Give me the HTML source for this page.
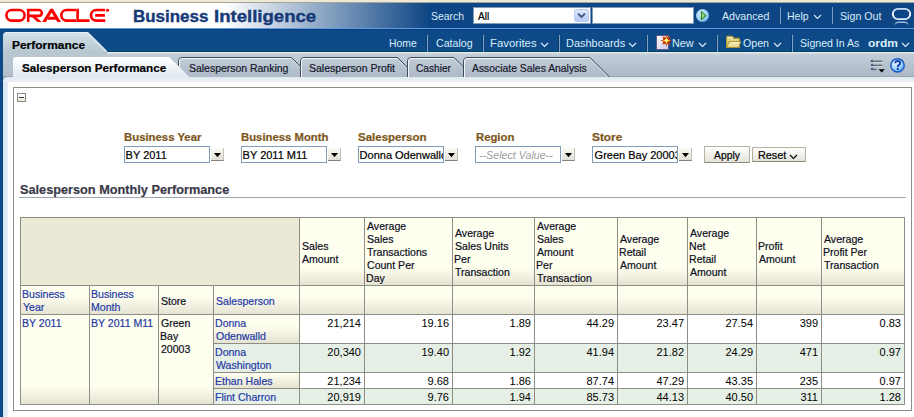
<!DOCTYPE html>
<html><head><meta charset="utf-8"><style>
html,body{margin:0;padding:0;}
body{width:914px;height:417px;overflow:hidden;position:relative;background:#fff;font-family:"Liberation Sans", sans-serif;}
body>div,body>svg,body>span{position:absolute;}
.t{white-space:nowrap;display:block;}
svg text{font-family:"Liberation Sans", sans-serif;}
</style></head><body>
<div style="left:0px;top:0px;width:914px;height:2px;background:#ECE9D8;"></div>
<div style="left:0px;top:2px;width:914px;height:1px;background:#A8A494;"></div>
<div style="left:0px;top:3px;width:914px;height:25px;background:linear-gradient(90deg,#FFFFFF 0px,#FFFFFF 225px,#0E4584 430px,#0E4584 914px);"></div>
<div style="left:0px;top:28px;width:914px;height:1px;background:#5C9BE6;"></div>
<div style="left:0px;top:29px;width:914px;height:1px;background:#0A3D79;"></div>
<div style="left:0px;top:30px;width:914px;height:19px;background:#0F4A88;"></div>
<div style="left:0px;top:49px;width:914px;height:2px;background:#0A5082;"></div>
<div style="left:0px;top:51px;width:914px;height:1px;background:#063E6E;"></div>
<svg style="left:0;top:0" width="120" height="28" viewBox="0 0 120 28">
<g fill="none" stroke="#FF0000" stroke-width="2.6">
<rect x="6.4" y="10" width="18.2" height="10.6" rx="5.3" ry="5.3"/>
<path d="M28.2 21.9V10H38.9a2.95 2.95 0 0 1 0 5.9H29.5"/>
<path d="M76 10H66.6a5.3 5.3 0 0 0 0 10.6H76" />
<path d="M77.6 8.7V20.6H89.6" />
<path d="M105.2 10H96.3a5.3 5.3 0 0 0 0 10.6H105.2M95.2 15.35H105" />
</g>
<g fill="#FF0000">
<path d="M30.2 15.2H34.2L41.6 21.9H37.4Z"/>
<path d="M42.2 21.9L50.3 8.7H52.9L61.0 21.9H57.3L51.6 12.4L45.9 21.9Z"/>
<path d="M49.0 16.7H55.0L56.9 19.7H47.9Q47.4 18.2 49.0 16.7Z"/>
<circle cx="107.6" cy="10.3" r="1.55"/>
</g>
</svg>
<span class="t" style="position:absolute;left:133.44px;top:8px;font-size:16px;line-height:17px;font-weight:bold;color:#173A78;transform:scaleX(1.0600);transform-origin:0 0;-webkit-text-stroke:0.4px #173A78;">Business</span>
<span class="t" style="position:absolute;left:213.54px;top:8px;font-size:16px;line-height:17px;font-weight:bold;color:#173A78;transform:scaleX(1.1609);transform-origin:0 0;-webkit-text-stroke:0.4px #173A78;">Intelligence</span>
<span class="t" style="position:absolute;left:431.20px;top:10px;font-size:11px;line-height:12px;font-weight:normal;color:#D8EEF8;transform:scaleX(0.9486);transform-origin:0 0;">Search</span>
<div style="left:473px;top:7px;width:118px;height:17px;background:#FFFFFF;box-sizing:border-box;border:1px solid #7F9DB9;"></div>
<span class="t" style="position:absolute;left:478.00px;top:10px;font-size:11px;line-height:12px;font-weight:normal;color:#000000;transform:scaleX(0.9167);transform-origin:0 0;-webkit-text-stroke:0.2px #000000;">All</span>
<div style="left:574px;top:9px;width:15px;height:13px;background:linear-gradient(#DDE8FD,#B4CBF6);box-sizing:border-box;border:1px solid #B8CCF0;border-radius:2px;"></div>
<svg style="left:577px;top:12px" width="9" height="7" viewBox="0 0 9 7"><path d="M1 1.5L4.5 5L8 1.5" fill="none" stroke="#4D6185" stroke-width="2"/></svg>
<div style="left:592px;top:7px;width:102px;height:17px;background:#FFFFFF;box-sizing:border-box;border:1px solid #7F9DB9;"></div>
<svg style="left:694px;top:7px" width="18" height="18" viewBox="0 0 18 18"><defs><radialGradient id="gg" cx="0.42" cy="0.4" r="0.62"><stop offset="0" stop-color="#DDF2FF"/><stop offset="0.7" stop-color="#9CD0F6"/><stop offset="1" stop-color="#4A94DC"/></radialGradient></defs><circle cx="8.6" cy="8.6" r="7.3" fill="#0A3468" opacity="0.6"/><circle cx="8.6" cy="8.6" r="6.6" fill="url(#gg)"/><path d="M7.4 4.6L11.9 8.6L7.4 12.6Z" fill="#9EDA8E" stroke="#2C8A1E" stroke-width="1.1" stroke-linejoin="round"/></svg>
<span class="t" style="position:absolute;left:721.50px;top:10px;font-size:11px;line-height:12px;font-weight:normal;color:#D8EEF8;transform:scaleX(0.9694);transform-origin:0 0;">Advanced</span>
<div style="left:780px;top:7px;width:1px;height:17px;background:#7A9CC0;"></div>
<span class="t" style="position:absolute;left:787.05px;top:10px;font-size:11px;line-height:12px;font-weight:normal;color:#D8EEF8;transform:scaleX(0.9545);transform-origin:0 0;">Help</span>
<svg style="left:813px;top:14px" width="9" height="6" viewBox="0 0 9 6"><path d="M1 1L4.5 4.5L8 1" fill="none" stroke="#D8EEF8" stroke-width="1.1"/></svg>
<div style="left:832px;top:7px;width:1px;height:17px;background:#7A9CC0;"></div>
<span class="t" style="position:absolute;left:840.00px;top:10px;font-size:11px;line-height:12px;font-weight:normal;color:#D8EEF8;transform:scaleX(0.9674);transform-origin:0 0;">Sign Out</span>
<svg style="left:890px;top:6px" width="24" height="22" viewBox="0 0 24 22"><defs><linearGradient id="rg" x1="0" y1="0" x2="0" y2="1"><stop offset="0" stop-color="#C8DDF4"/><stop offset="0.5" stop-color="#FFFFFF"/><stop offset="1" stop-color="#DDEBFA"/></linearGradient><linearGradient id="rf" x1="0" y1="0" x2="0" y2="1"><stop offset="0" stop-color="#A8C4E6"/><stop offset="1" stop-color="#0F4A88"/></linearGradient></defs><rect x="2.8" y="2.9" width="17.4" height="10.2" rx="5.1" fill="none" stroke="url(#rg)" stroke-width="1.8"/><path d="M4.5 19Q6 16.2 9 16.2H14Q17 16.2 18.5 19" fill="none" stroke="url(#rf)" stroke-width="1.6"/></svg>
<svg style="left:0;top:29px" width="120" height="23" viewBox="0 0 120 23"><defs><linearGradient id="pt" x1="0" y1="0" x2="0" y2="1"><stop offset="0" stop-color="#D4E3E9"/><stop offset="1" stop-color="#B6C7D1"/></linearGradient></defs><path d="M3 23V6.5Q3 3 6.5 3H87.5L107.5 23Z" fill="url(#pt)"/><path d="M6 3.5H87" stroke="#EAF1F4" stroke-width="1"/><path d="M87.5 3.5L106.5 22.5" stroke="#E2ECF0" stroke-width="1.6"/></svg>
<span class="t" style="position:absolute;left:12.00px;top:39px;font-size:11px;line-height:12px;font-weight:bold;color:#000000;transform:scaleX(1.0866);transform-origin:0 0;-webkit-text-stroke:0.2px #000000;">Performance</span>
<div style="left:426px;top:35px;width:1px;height:17px;background:#0A3A72;"></div>
<div style="left:427px;top:35px;width:1px;height:17px;background:#7FA3C0;"></div>
<div style="left:482px;top:35px;width:1px;height:17px;background:#0A3A72;"></div>
<div style="left:483px;top:35px;width:1px;height:17px;background:#7FA3C0;"></div>
<div style="left:558px;top:35px;width:1px;height:17px;background:#0A3A72;"></div>
<div style="left:559px;top:35px;width:1px;height:17px;background:#7FA3C0;"></div>
<div style="left:646px;top:35px;width:1px;height:17px;background:#0A3A72;"></div>
<div style="left:647px;top:35px;width:1px;height:17px;background:#7FA3C0;"></div>
<div style="left:716px;top:35px;width:1px;height:17px;background:#0A3A72;"></div>
<div style="left:717px;top:35px;width:1px;height:17px;background:#7FA3C0;"></div>
<div style="left:791px;top:35px;width:1px;height:17px;background:#0A3A72;"></div>
<div style="left:792px;top:35px;width:1px;height:17px;background:#7FA3C0;"></div>
<span class="t" style="position:absolute;left:388.55px;top:37px;font-size:11px;line-height:12px;font-weight:normal;color:#D8EEF8;transform:scaleX(0.9464);transform-origin:0 0;">Home</span>
<span class="t" style="position:absolute;left:435.50px;top:37px;font-size:11px;line-height:12px;font-weight:normal;color:#D8EEF8;transform:scaleX(0.9658);transform-origin:0 0;">Catalog</span>
<span class="t" style="position:absolute;left:490.27px;top:37px;font-size:11px;line-height:12px;font-weight:normal;color:#D8EEF8;transform:scaleX(1.0295);transform-origin:0 0;">Favorites</span>
<svg style="left:540px;top:42px" width="9" height="6" viewBox="0 0 9 6"><path d="M1 1L4.5 4.5L8 1" fill="none" stroke="#D8EEF8" stroke-width="1.1"/></svg>
<span class="t" style="position:absolute;left:566.20px;top:37px;font-size:11px;line-height:12px;font-weight:normal;color:#D8EEF8;transform:scaleX(0.9966);transform-origin:0 0;">Dashboards</span>
<svg style="left:628px;top:42px" width="9" height="6" viewBox="0 0 9 6"><path d="M1 1L4.5 4.5L8 1" fill="none" stroke="#D8EEF8" stroke-width="1.1"/></svg>
<svg style="left:652px;top:32px" width="24" height="20" viewBox="0 0 24 20"><defs><linearGradient id="pg" x1="0" y1="0" x2="1" y2="1"><stop offset="0" stop-color="#FFFFFF"/><stop offset="1" stop-color="#C9C4E4"/></linearGradient></defs><rect x="4.5" y="3.5" width="12" height="14" fill="url(#pg)" stroke="#5E5A8A" stroke-width="1"/><path d="M14.4 2.6L15.5 5.6L18.6 4.3L17.3 7.4L20.3 8.5L17.3 9.6L18.6 12.7L15.5 11.4L14.4 14.4L13.3 11.4L10.2 12.7L11.5 9.6L8.5 8.5L11.5 7.4L10.2 4.3L13.3 5.6Z" fill="#C8400A"/><circle cx="14.4" cy="8.5" r="3.2" fill="#B83A08"/><path d="M14.4 4.6L15.3 7.6L18.3 8.5L15.3 9.4L14.4 12.4L13.5 9.4L10.5 8.5L13.5 7.6Z" fill="#FFE23A"/><circle cx="14.4" cy="8.5" r="1.4" fill="#FFF5A0"/></svg>
<span class="t" style="position:absolute;left:672.22px;top:37px;font-size:11px;line-height:12px;font-weight:normal;color:#D8EEF8;transform:scaleX(0.9810);transform-origin:0 0;">New</span>
<svg style="left:698px;top:42px" width="9" height="6" viewBox="0 0 9 6"><path d="M1 1L4.5 4.5L8 1" fill="none" stroke="#D8EEF8" stroke-width="1.1"/></svg>
<svg style="left:722px;top:32px" width="24" height="20" viewBox="0 0 24 20"><path d="M4.6 15.4V5.2Q4.6 4.4 5.4 4.4H10.4L11.8 6.4H16.6Q17.4 6.4 17.4 7.2V15.4Z" fill="#E2D488" stroke="#AE9838" stroke-width="1.1"/><path d="M5.8 5.6H10L11.2 7.4" fill="none" stroke="#FFFBE0" stroke-width="0.9"/><path d="M4.6 15.4L7.2 9.6H18.6L16.8 15.4Z" fill="#EEE4A2" stroke="#AE9838" stroke-width="1.1" stroke-linejoin="round"/><path d="M7.8 10.6H17.4" stroke="#FFFBE0" stroke-width="0.8"/></svg>
<span class="t" style="position:absolute;left:743.30px;top:37px;font-size:11px;line-height:12px;font-weight:normal;color:#D8EEF8;transform:scaleX(0.9667);transform-origin:0 0;">Open</span>
<svg style="left:773px;top:42px" width="9" height="6" viewBox="0 0 9 6"><path d="M1 1L4.5 4.5L8 1" fill="none" stroke="#D8EEF8" stroke-width="1.1"/></svg>
<span class="t" style="position:absolute;left:800.30px;top:37px;font-size:11px;line-height:12px;font-weight:normal;color:#D8EEF8;transform:scaleX(0.9597);transform-origin:0 0;">Signed In As</span>
<span class="t" style="position:absolute;left:868.00px;top:37px;font-size:11px;line-height:12px;font-weight:bold;color:#D8EEF8;transform:scaleX(1.0926);transform-origin:0 0;">ordm</span>
<svg style="left:901px;top:42px" width="9" height="6" viewBox="0 0 9 6"><path d="M1 1L4.5 4.5L8 1" fill="none" stroke="#D8EEF8" stroke-width="1.1"/></svg>
<div style="left:0px;top:29px;width:3px;height:388px;background:#0F4A88;"></div>
<div style="left:107px;top:52px;width:807px;height:1px;background:#E4E9EE;"></div>
<div style="left:107px;top:53px;width:807px;height:1px;background:#D3DBE3;"></div>
<div style="left:3px;top:52px;width:104px;height:2px;background:#B6C6CF;"></div>
<div style="left:3px;top:54px;width:911px;height:22px;background:linear-gradient(#C3CDD8,#ACB8C7);"></div>
<div style="left:3px;top:54px;width:110px;height:22px;background:linear-gradient(90deg,rgba(180,196,206,1) 0px,rgba(180,196,206,1) 95px,rgba(180,196,206,0) 110px);opacity:0.6;"></div>
<div style="left:3px;top:76px;width:911px;height:1px;background:#9AA6B5;"></div>
<div style="left:3px;top:77px;width:8px;height:8px;background:#A4B0C0;"></div>
<div style="left:3px;top:77px;width:911px;height:340px;background:#FFFFFF;border-top-left-radius:6px;"></div>
<div style="left:3px;top:77px;width:911px;height:5px;background:linear-gradient(#E0E8F0,#EDF2F7);border-top-left-radius:6px;"></div>
<div style="left:3px;top:82px;width:5px;height:335px;background:linear-gradient(90deg,#D6E3EF,#E6EEF6);"></div>
<svg style="left:0;top:50px" width="620" height="30" viewBox="0 0 620 30">
<defs>
<linearGradient id="it" x1="0" y1="0" x2="0" y2="1"><stop offset="0" stop-color="#C3CDD8"/><stop offset="1" stop-color="#ADB9C8"/></linearGradient>
<linearGradient id="at" x1="0" y1="0" x2="0" y2="1"><stop offset="0" stop-color="#FFFFFF"/><stop offset="1" stop-color="#E1E8F0"/></linearGradient>
</defs>
<g stroke-width="1" fill="none">
<path d="M463.5 27V11Q463.5 7.5 467 7.5H590L609.5 27Z" fill="url(#it)"/>
<path d="M463.5 27V11Q463.5 7.5 467 7.5H590L609.5 27" stroke="#3E4A5A"/>
<path d="M464.5 27V11Q464.5 8.5 467 8.5H589.5" stroke="#F4F7FA"/>
<path d="M590 9L607.5 26.5" stroke="#DDE4EC" stroke-width="0.8"/>
<path d="M407.5 27V11Q407.5 7.5 411 7.5H454L463.5 17V27Z" fill="url(#it)"/>
<path d="M407.5 27V11Q407.5 7.5 411 7.5H454L463.5 17V27" stroke="#3E4A5A"/>
<path d="M408.5 27V11Q408.5 8.5 411 8.5H453.5" stroke="#F4F7FA"/>
<path d="M454 9L462 17" stroke="#DDE4EC" stroke-width="0.8"/>
<path d="M300.5 27V11Q300.5 7.5 304 7.5H397.5L407.5 17.5V27Z" fill="url(#it)"/>
<path d="M300.5 27V11Q300.5 7.5 304 7.5H397.5L407.5 17.5V27" stroke="#3E4A5A"/>
<path d="M301.5 27V11Q301.5 8.5 304 8.5H397" stroke="#F4F7FA"/>
<path d="M397.5 9L406 17.5" stroke="#DDE4EC" stroke-width="0.8"/>
<path d="M178.5 27V11Q178.5 7.5 182 7.5H291.5L300.5 16.5V27Z" fill="url(#it)"/>
<path d="M178.5 27V11Q178.5 7.5 182 7.5H291.5L300.5 16.5V27" stroke="#3E4A5A"/>
<path d="M179.5 27V11Q179.5 8.5 182 8.5H291" stroke="#F4F7FA"/>
<path d="M291.5 9L299 16.5" stroke="#DDE4EC" stroke-width="0.8"/>
<path d="M13 27V10Q13 7 16 7H169L189 27Z" fill="url(#at)"/>
<path d="M169 7L189 27" stroke="#E4EAF0"/>
</g>
</svg>
<span class="t" style="position:absolute;left:22.00px;top:62px;font-size:11px;line-height:12px;font-weight:bold;color:#000000;transform:scaleX(1.0625);transform-origin:0 0;-webkit-text-stroke:0.2px #000000;">Salesperson Performance</span>
<span class="t" style="position:absolute;left:189.20px;top:62px;font-size:11px;line-height:12px;font-weight:normal;color:#141828;transform:scaleX(0.9500);transform-origin:0 0;-webkit-text-stroke:0.2px #141828;">Salesperson Ranking</span>
<span class="t" style="position:absolute;left:308.50px;top:62px;font-size:11px;line-height:12px;font-weight:normal;color:#141828;transform:scaleX(0.9567);transform-origin:0 0;-webkit-text-stroke:0.2px #141828;">Salesperson Profit</span>
<span class="t" style="position:absolute;left:415.50px;top:62px;font-size:11px;line-height:12px;font-weight:normal;color:#141828;transform:scaleX(0.9211);transform-origin:0 0;-webkit-text-stroke:0.2px #141828;">Cashier</span>
<span class="t" style="position:absolute;left:472.00px;top:62px;font-size:11px;line-height:12px;font-weight:normal;color:#141828;transform:scaleX(0.9434);transform-origin:0 0;-webkit-text-stroke:0.2px #141828;">Associate Sales Analysis</span>
<svg style="left:866px;top:56px" width="22" height="20" viewBox="0 0 22 20"><g fill="#201C60"><path d="M4.4 4.9L6.6 3.6V6.2Z"/><path d="M4.4 9L6.6 7.7V10.3Z"/><path d="M4.4 13L6.6 11.7V14.3Z"/></g><g stroke="#5E656E" stroke-width="1.4"><path d="M6.6 5.3H16.2"/><path d="M6.6 9.4H16.2"/><path d="M6.6 13.4H10.5"/></g><g stroke="#D8DEE6" stroke-width="0.8"><path d="M7 6.4H16.6"/><path d="M7 10.5H16.6"/></g><path d="M12.6 13.2H18.8L15.7 16.4Z" fill="#000"/></svg>
<svg style="left:888px;top:56px" width="20" height="19" viewBox="0 0 20 19"><defs><radialGradient id="hg" cx="0.38" cy="0.3" r="0.8"><stop offset="0" stop-color="#F4FAFF"/><stop offset="0.55" stop-color="#A6D2FA"/><stop offset="1" stop-color="#4C96E6"/></radialGradient></defs><circle cx="9.5" cy="9.35" r="6.7" fill="url(#hg)" stroke="#1A5CC4" stroke-width="1.5"/><path d="M7.3 7.3Q7.3 4.9 9.7 4.9Q12.1 4.9 12.1 7Q12.1 8.3 10.7 9.1Q9.8 9.7 9.8 10.9" fill="none" stroke="#1448B0" stroke-width="2"/><circle cx="9.8" cy="13" r="1.15" fill="#1448B0"/></svg>
<div style="left:13px;top:87px;width:899px;height:324px;background:transparent;box-sizing:border-box;border:1px solid #8E8E86;"></div>
<div style="left:17px;top:93px;width:9px;height:9px;background:linear-gradient(#FFFFFF,#E8E8D8);box-sizing:border-box;border:1px solid #8A8A80;"></div>
<div style="left:19px;top:97px;width:5px;height:1px;background:#383838;"></div>
<span class="t" style="position:absolute;left:124.20px;top:131px;font-size:11px;line-height:12px;font-weight:bold;color:#7C561A;transform:scaleX(1.0320);transform-origin:0 0;-webkit-text-stroke:0.2px #7C561A;">Business Year</span>
<span class="t" style="position:absolute;left:241.00px;top:131px;font-size:11px;line-height:12px;font-weight:bold;color:#7C561A;transform:scaleX(1.0294);transform-origin:0 0;-webkit-text-stroke:0.2px #7C561A;">Business Month</span>
<span class="t" style="position:absolute;left:358.10px;top:131px;font-size:11px;line-height:12px;font-weight:bold;color:#7C561A;transform:scaleX(1.0462);transform-origin:0 0;-webkit-text-stroke:0.2px #7C561A;">Salesperson</span>
<span class="t" style="position:absolute;left:475.50px;top:131px;font-size:11px;line-height:12px;font-weight:bold;color:#7C561A;transform:scaleX(1.0270);transform-origin:0 0;-webkit-text-stroke:0.2px #7C561A;">Region</span>
<span class="t" style="position:absolute;left:592.40px;top:131px;font-size:11px;line-height:12px;font-weight:bold;color:#7C561A;transform:scaleX(1.0786);transform-origin:0 0;-webkit-text-stroke:0.2px #7C561A;">Store</span>
<div style="left:124px;top:146px;width:86px;height:17px;background:#FFFFFF;box-sizing:border-box;border:1px solid #7F9DB9;"></div>
<div style="left:241px;top:146px;width:86px;height:17px;background:#FFFFFF;box-sizing:border-box;border:1px solid #7F9DB9;"></div>
<div style="left:358px;top:146px;width:86px;height:17px;background:#FFFFFF;box-sizing:border-box;border:1px solid #7F9DB9;"></div>
<div style="left:475px;top:146px;width:86px;height:17px;background:#FFFFFF;box-sizing:border-box;border:1px solid #7F9DB9;"></div>
<div style="left:592px;top:146px;width:86px;height:17px;background:#FFFFFF;box-sizing:border-box;border:1px solid #7F9DB9;"></div>
<div style="left:125px;top:147px;width:84px;height:15px;overflow:hidden"><span class="t" style="position:absolute;left:0.60px;top:2px;font-size:11px;line-height:12px;font-weight:normal;color:#000000;-webkit-text-stroke:0.2px #000000;">BY 2011</span></div>
<div style="left:211px;top:148px;width:13px;height:13px;background:linear-gradient(#FAFAF6,#E2E0D6);box-sizing:border-box;border-right:1px solid #C4C2B8;border-bottom:1px solid #858378;"></div>
<svg style="left:214px;top:153px" width="8" height="5" viewBox="0 0 8 5"><path d="M0 0H7L3.5 4.2Z" fill="#000"/></svg>
<div style="left:242px;top:147px;width:84px;height:15px;overflow:hidden"><span class="t" style="position:absolute;left:0.60px;top:2px;font-size:11px;line-height:12px;font-weight:normal;color:#000000;-webkit-text-stroke:0.2px #000000;">BY 2011 M11</span></div>
<div style="left:328px;top:148px;width:13px;height:13px;background:linear-gradient(#FAFAF6,#E2E0D6);box-sizing:border-box;border-right:1px solid #C4C2B8;border-bottom:1px solid #858378;"></div>
<svg style="left:331px;top:153px" width="8" height="5" viewBox="0 0 8 5"><path d="M0 0H7L3.5 4.2Z" fill="#000"/></svg>
<div style="left:359px;top:147px;width:84px;height:15px;overflow:hidden"><span class="t" style="position:absolute;left:0.60px;top:2px;font-size:11px;line-height:12px;font-weight:normal;color:#000000;-webkit-text-stroke:0.2px #000000;">Donna Odenwalld</span></div>
<div style="left:445px;top:148px;width:13px;height:13px;background:linear-gradient(#FAFAF6,#E2E0D6);box-sizing:border-box;border-right:1px solid #C4C2B8;border-bottom:1px solid #858378;"></div>
<svg style="left:448px;top:153px" width="8" height="5" viewBox="0 0 8 5"><path d="M0 0H7L3.5 4.2Z" fill="#000"/></svg>
<div style="left:476px;top:147px;width:84px;height:15px;overflow:hidden"><span class="t" style="position:absolute;left:3.20px;top:2px;font-size:11px;line-height:12px;font-weight:normal;color:#A0A0A0;transform:scaleX(0.9700);transform-origin:0 0;font-style:italic;">--Select Value--</span></div>
<div style="left:562px;top:148px;width:13px;height:13px;background:linear-gradient(#FAFAF6,#E2E0D6);box-sizing:border-box;border-right:1px solid #C4C2B8;border-bottom:1px solid #858378;"></div>
<svg style="left:565px;top:153px" width="8" height="5" viewBox="0 0 8 5"><path d="M0 0H7L3.5 4.2Z" fill="#000"/></svg>
<div style="left:593px;top:147px;width:84px;height:15px;overflow:hidden"><span class="t" style="position:absolute;left:1.60px;top:2px;font-size:11px;line-height:12px;font-weight:normal;color:#000000;-webkit-text-stroke:0.2px #000000;">Green Bay 20003</span></div>
<div style="left:679px;top:148px;width:13px;height:13px;background:linear-gradient(#FAFAF6,#E2E0D6);box-sizing:border-box;border-right:1px solid #C4C2B8;border-bottom:1px solid #858378;"></div>
<svg style="left:682px;top:153px" width="8" height="5" viewBox="0 0 8 5"><path d="M0 0H7L3.5 4.2Z" fill="#000"/></svg>
<div style="left:704px;top:146px;width:46px;height:17px;background:linear-gradient(#FFFFFF,#E4E2DA);box-sizing:border-box;border:1px solid #B4B19C;border-bottom-color:#8C8A78;"></div>
<span class="t" style="position:absolute;left:714.00px;top:149px;font-size:11px;line-height:12px;font-weight:normal;color:#000000;transform:scaleX(0.9393);transform-origin:0 0;-webkit-text-stroke:0.2px #000000;">Apply</span>
<div style="left:752px;top:147px;width:54px;height:15px;background:linear-gradient(#FFFFFF,#E4E2DA);box-sizing:border-box;border:1px solid #B4B19C;border-bottom-color:#8C8A78;"></div>
<span class="t" style="position:absolute;left:757.72px;top:149px;font-size:11px;line-height:12px;font-weight:normal;color:#000000;transform:scaleX(0.9821);transform-origin:0 0;-webkit-text-stroke:0.2px #000000;">Reset</span>
<svg style="left:789px;top:154px" width="9" height="6" viewBox="0 0 9 6"><path d="M1 1L4.5 4.5L8 1" fill="none" stroke="#000" stroke-width="1.1"/></svg>
<span class="t" style="position:absolute;left:20.20px;top:183px;font-size:12px;line-height:14px;font-weight:bold;color:#3A3A4A;transform:scaleX(1.0599);transform-origin:0 0;-webkit-text-stroke:0.2px #3A3A4A;">Salesperson Monthly Performance</span>
<div style="left:19px;top:197px;width:887px;height:1px;background:#9EA5B2;"></div>
<div style="left:21px;top:218px;width:278px;height:67px;background:#EAE9D6;"></div>
<div style="left:300px;top:218px;width:64px;height:67px;background:linear-gradient(#FFFFF0 0px,#FFFFF0 49px,#E5E3D2 67px);"></div>
<div style="left:365px;top:218px;width:87px;height:67px;background:linear-gradient(#FFFFF0 0px,#FFFFF0 49px,#E5E3D2 67px);"></div>
<div style="left:453px;top:218px;width:81px;height:67px;background:linear-gradient(#FFFFF0 0px,#FFFFF0 49px,#E5E3D2 67px);"></div>
<div style="left:535px;top:218px;width:82px;height:67px;background:linear-gradient(#FFFFF0 0px,#FFFFF0 49px,#E5E3D2 67px);"></div>
<div style="left:618px;top:218px;width:69px;height:67px;background:linear-gradient(#FFFFF0 0px,#FFFFF0 49px,#E5E3D2 67px);"></div>
<div style="left:688px;top:218px;width:68px;height:67px;background:linear-gradient(#FFFFF0 0px,#FFFFF0 49px,#E5E3D2 67px);"></div>
<div style="left:757px;top:218px;width:64px;height:67px;background:linear-gradient(#FFFFF0 0px,#FFFFF0 49px,#E5E3D2 67px);"></div>
<div style="left:822px;top:218px;width:82px;height:67px;background:linear-gradient(#FFFFF0 0px,#FFFFF0 49px,#E5E3D2 67px);"></div>
<div style="left:21px;top:286px;width:68px;height:28px;background:linear-gradient(#FFFFF0 0px,#FFFFF0 10px,#E5E3D2 28px);"></div>
<div style="left:90px;top:286px;width:68px;height:28px;background:linear-gradient(#FFFFF0 0px,#FFFFF0 10px,#E5E3D2 28px);"></div>
<div style="left:159px;top:286px;width:54px;height:28px;background:linear-gradient(#FFFFF0 0px,#FFFFF0 10px,#E5E3D2 28px);"></div>
<div style="left:214px;top:286px;width:85px;height:28px;background:linear-gradient(#FFFFF0 0px,#FFFFF0 10px,#E5E3D2 28px);"></div>
<div style="left:300px;top:286px;width:64px;height:28px;background:linear-gradient(#FFFFF0 0px,#FFFFF0 10px,#E5E3D2 28px);"></div>
<div style="left:365px;top:286px;width:87px;height:28px;background:linear-gradient(#FFFFF0 0px,#FFFFF0 10px,#E5E3D2 28px);"></div>
<div style="left:453px;top:286px;width:81px;height:28px;background:linear-gradient(#FFFFF0 0px,#FFFFF0 10px,#E5E3D2 28px);"></div>
<div style="left:535px;top:286px;width:82px;height:28px;background:linear-gradient(#FFFFF0 0px,#FFFFF0 10px,#E5E3D2 28px);"></div>
<div style="left:618px;top:286px;width:69px;height:28px;background:linear-gradient(#FFFFF0 0px,#FFFFF0 10px,#E5E3D2 28px);"></div>
<div style="left:688px;top:286px;width:68px;height:28px;background:linear-gradient(#FFFFF0 0px,#FFFFF0 10px,#E5E3D2 28px);"></div>
<div style="left:757px;top:286px;width:64px;height:28px;background:linear-gradient(#FFFFF0 0px,#FFFFF0 10px,#E5E3D2 28px);"></div>
<div style="left:822px;top:286px;width:82px;height:28px;background:linear-gradient(#FFFFF0 0px,#FFFFF0 10px,#E5E3D2 28px);"></div>
<div style="left:21px;top:315px;width:68px;height:89px;background:linear-gradient(#FFFFF0 0px,#FFFFF0 71px,#E5E3D2 89px);"></div>
<div style="left:90px;top:315px;width:68px;height:89px;background:linear-gradient(#FFFFF0 0px,#FFFFF0 71px,#E5E3D2 89px);"></div>
<div style="left:159px;top:315px;width:54px;height:89px;background:linear-gradient(#FFFFF0 0px,#FFFFF0 71px,#E5E3D2 89px);"></div>
<div style="left:214px;top:315px;width:85px;height:28px;background:linear-gradient(#FFFFF0 0px,#FFFFF0 10px,#E5E3D2 28px);"></div>
<div style="left:300px;top:315px;width:604px;height:28px;background:#FFFFFF;"></div>
<div style="left:214px;top:344px;width:690px;height:28px;background:#E6F0E6;"></div>
<div style="left:214px;top:373px;width:85px;height:15px;background:linear-gradient(#FFFFF0 0px,#FFFFF0 0px,#E5E3D2 15px);"></div>
<div style="left:300px;top:373px;width:604px;height:15px;background:#FFFFFF;"></div>
<div style="left:214px;top:389px;width:690px;height:15px;background:#E6F0E6;"></div>
<div style="left:20px;top:217px;width:1px;height:188px;background:#8E8E86;"></div>
<div style="left:299px;top:217px;width:1px;height:188px;background:#8E8E86;"></div>
<div style="left:89px;top:285px;width:1px;height:120px;background:#8E8E86;"></div>
<div style="left:158px;top:285px;width:1px;height:120px;background:#8E8E86;"></div>
<div style="left:213px;top:285px;width:1px;height:120px;background:#8E8E86;"></div>
<div style="left:364px;top:217px;width:1px;height:188px;background:#8E8E86;"></div>
<div style="left:452px;top:217px;width:1px;height:188px;background:#8E8E86;"></div>
<div style="left:534px;top:217px;width:1px;height:188px;background:#8E8E86;"></div>
<div style="left:617px;top:217px;width:1px;height:188px;background:#8E8E86;"></div>
<div style="left:687px;top:217px;width:1px;height:188px;background:#8E8E86;"></div>
<div style="left:756px;top:217px;width:1px;height:188px;background:#8E8E86;"></div>
<div style="left:821px;top:217px;width:1px;height:188px;background:#8E8E86;"></div>
<div style="left:904px;top:217px;width:1px;height:188px;background:#8E8E86;"></div>
<div style="left:20px;top:217px;width:885px;height:1px;background:#8E8E86;"></div>
<div style="left:20px;top:285px;width:885px;height:1px;background:#8E8E86;"></div>
<div style="left:20px;top:314px;width:885px;height:1px;background:#8E8E86;"></div>
<div style="left:213px;top:343px;width:692px;height:1px;background:#8E8E86;"></div>
<div style="left:213px;top:372px;width:692px;height:1px;background:#8E8E86;"></div>
<div style="left:213px;top:388px;width:692px;height:1px;background:#8E8E86;"></div>
<div style="left:20px;top:404px;width:885px;height:1px;background:#8E8E86;"></div>
<span class="t" style="position:absolute;left:301.70px;top:240px;font-size:11px;line-height:12px;font-weight:normal;color:#0C0E1C;transform:scaleX(0.9600);transform-origin:0 0;-webkit-text-stroke:0.2px #0C0E1C;">Sales</span>
<span class="t" style="position:absolute;left:301.70px;top:253px;font-size:11px;line-height:12px;font-weight:normal;color:#0C0E1C;transform:scaleX(0.9600);transform-origin:0 0;-webkit-text-stroke:0.2px #0C0E1C;">Amount</span>
<span class="t" style="position:absolute;left:366.70px;top:220px;font-size:11px;line-height:12px;font-weight:normal;color:#0C0E1C;transform:scaleX(0.9600);transform-origin:0 0;-webkit-text-stroke:0.2px #0C0E1C;">Average</span>
<span class="t" style="position:absolute;left:366.70px;top:233px;font-size:11px;line-height:12px;font-weight:normal;color:#0C0E1C;transform:scaleX(0.9600);transform-origin:0 0;-webkit-text-stroke:0.2px #0C0E1C;">Sales</span>
<span class="t" style="position:absolute;left:366.70px;top:246px;font-size:11px;line-height:12px;font-weight:normal;color:#0C0E1C;transform:scaleX(0.9600);transform-origin:0 0;-webkit-text-stroke:0.2px #0C0E1C;">Transactions</span>
<span class="t" style="position:absolute;left:366.70px;top:259px;font-size:11px;line-height:12px;font-weight:normal;color:#0C0E1C;transform:scaleX(0.9600);transform-origin:0 0;-webkit-text-stroke:0.2px #0C0E1C;">Count Per</span>
<span class="t" style="position:absolute;left:365.74px;top:272px;font-size:11px;line-height:12px;font-weight:normal;color:#0C0E1C;transform:scaleX(0.9600);transform-origin:0 0;-webkit-text-stroke:0.2px #0C0E1C;">Day</span>
<span class="t" style="position:absolute;left:454.70px;top:227px;font-size:11px;line-height:12px;font-weight:normal;color:#0C0E1C;transform:scaleX(0.9600);transform-origin:0 0;-webkit-text-stroke:0.2px #0C0E1C;">Average</span>
<span class="t" style="position:absolute;left:454.70px;top:240px;font-size:11px;line-height:12px;font-weight:normal;color:#0C0E1C;transform:scaleX(0.9600);transform-origin:0 0;-webkit-text-stroke:0.2px #0C0E1C;">Sales Units</span>
<span class="t" style="position:absolute;left:453.74px;top:253px;font-size:11px;line-height:12px;font-weight:normal;color:#0C0E1C;transform:scaleX(0.9600);transform-origin:0 0;-webkit-text-stroke:0.2px #0C0E1C;">Per</span>
<span class="t" style="position:absolute;left:454.70px;top:266px;font-size:11px;line-height:12px;font-weight:normal;color:#0C0E1C;transform:scaleX(0.9600);transform-origin:0 0;-webkit-text-stroke:0.2px #0C0E1C;">Transaction</span>
<span class="t" style="position:absolute;left:536.70px;top:220px;font-size:11px;line-height:12px;font-weight:normal;color:#0C0E1C;transform:scaleX(0.9600);transform-origin:0 0;-webkit-text-stroke:0.2px #0C0E1C;">Average</span>
<span class="t" style="position:absolute;left:536.70px;top:233px;font-size:11px;line-height:12px;font-weight:normal;color:#0C0E1C;transform:scaleX(0.9600);transform-origin:0 0;-webkit-text-stroke:0.2px #0C0E1C;">Sales</span>
<span class="t" style="position:absolute;left:536.70px;top:246px;font-size:11px;line-height:12px;font-weight:normal;color:#0C0E1C;transform:scaleX(0.9600);transform-origin:0 0;-webkit-text-stroke:0.2px #0C0E1C;">Amount</span>
<span class="t" style="position:absolute;left:535.74px;top:259px;font-size:11px;line-height:12px;font-weight:normal;color:#0C0E1C;transform:scaleX(0.9600);transform-origin:0 0;-webkit-text-stroke:0.2px #0C0E1C;">Per</span>
<span class="t" style="position:absolute;left:536.70px;top:272px;font-size:11px;line-height:12px;font-weight:normal;color:#0C0E1C;transform:scaleX(0.9600);transform-origin:0 0;-webkit-text-stroke:0.2px #0C0E1C;">Transaction</span>
<span class="t" style="position:absolute;left:619.70px;top:233px;font-size:11px;line-height:12px;font-weight:normal;color:#0C0E1C;transform:scaleX(0.9600);transform-origin:0 0;-webkit-text-stroke:0.2px #0C0E1C;">Average</span>
<span class="t" style="position:absolute;left:618.74px;top:246px;font-size:11px;line-height:12px;font-weight:normal;color:#0C0E1C;transform:scaleX(0.9600);transform-origin:0 0;-webkit-text-stroke:0.2px #0C0E1C;">Retail</span>
<span class="t" style="position:absolute;left:619.70px;top:259px;font-size:11px;line-height:12px;font-weight:normal;color:#0C0E1C;transform:scaleX(0.9600);transform-origin:0 0;-webkit-text-stroke:0.2px #0C0E1C;">Amount</span>
<span class="t" style="position:absolute;left:689.70px;top:227px;font-size:11px;line-height:12px;font-weight:normal;color:#0C0E1C;transform:scaleX(0.9600);transform-origin:0 0;-webkit-text-stroke:0.2px #0C0E1C;">Average</span>
<span class="t" style="position:absolute;left:688.74px;top:240px;font-size:11px;line-height:12px;font-weight:normal;color:#0C0E1C;transform:scaleX(0.9600);transform-origin:0 0;-webkit-text-stroke:0.2px #0C0E1C;">Net</span>
<span class="t" style="position:absolute;left:688.74px;top:253px;font-size:11px;line-height:12px;font-weight:normal;color:#0C0E1C;transform:scaleX(0.9600);transform-origin:0 0;-webkit-text-stroke:0.2px #0C0E1C;">Retail</span>
<span class="t" style="position:absolute;left:689.70px;top:266px;font-size:11px;line-height:12px;font-weight:normal;color:#0C0E1C;transform:scaleX(0.9600);transform-origin:0 0;-webkit-text-stroke:0.2px #0C0E1C;">Amount</span>
<span class="t" style="position:absolute;left:757.74px;top:240px;font-size:11px;line-height:12px;font-weight:normal;color:#0C0E1C;transform:scaleX(0.9600);transform-origin:0 0;-webkit-text-stroke:0.2px #0C0E1C;">Profit</span>
<span class="t" style="position:absolute;left:758.70px;top:253px;font-size:11px;line-height:12px;font-weight:normal;color:#0C0E1C;transform:scaleX(0.9600);transform-origin:0 0;-webkit-text-stroke:0.2px #0C0E1C;">Amount</span>
<span class="t" style="position:absolute;left:823.70px;top:233px;font-size:11px;line-height:12px;font-weight:normal;color:#0C0E1C;transform:scaleX(0.9600);transform-origin:0 0;-webkit-text-stroke:0.2px #0C0E1C;">Average</span>
<span class="t" style="position:absolute;left:822.74px;top:246px;font-size:11px;line-height:12px;font-weight:normal;color:#0C0E1C;transform:scaleX(0.9600);transform-origin:0 0;-webkit-text-stroke:0.2px #0C0E1C;">Profit Per</span>
<span class="t" style="position:absolute;left:823.70px;top:259px;font-size:11px;line-height:12px;font-weight:normal;color:#0C0E1C;transform:scaleX(0.9600);transform-origin:0 0;-webkit-text-stroke:0.2px #0C0E1C;">Transaction</span>
<span class="t" style="position:absolute;left:21.54px;top:288px;font-size:11px;line-height:12px;font-weight:normal;color:#1E3AA6;transform:scaleX(0.9600);transform-origin:0 0;-webkit-text-stroke:0.2px #1E3AA6;">Business</span>
<span class="t" style="position:absolute;left:22.50px;top:301px;font-size:11px;line-height:12px;font-weight:normal;color:#1E3AA6;transform:scaleX(0.9600);transform-origin:0 0;-webkit-text-stroke:0.2px #1E3AA6;">Year</span>
<span class="t" style="position:absolute;left:90.54px;top:288px;font-size:11px;line-height:12px;font-weight:normal;color:#1E3AA6;transform:scaleX(0.9600);transform-origin:0 0;-webkit-text-stroke:0.2px #1E3AA6;">Business</span>
<span class="t" style="position:absolute;left:90.54px;top:301px;font-size:11px;line-height:12px;font-weight:normal;color:#1E3AA6;transform:scaleX(0.9600);transform-origin:0 0;-webkit-text-stroke:0.2px #1E3AA6;">Month</span>
<span class="t" style="position:absolute;left:160.50px;top:295px;font-size:11px;line-height:12px;font-weight:normal;color:#0C0E1C;transform:scaleX(0.9600);transform-origin:0 0;-webkit-text-stroke:0.2px #0C0E1C;">Store</span>
<span class="t" style="position:absolute;left:215.50px;top:295px;font-size:11px;line-height:12px;font-weight:normal;color:#1E3AA6;transform:scaleX(0.9600);transform-origin:0 0;-webkit-text-stroke:0.2px #1E3AA6;">Salesperson</span>
<span class="t" style="position:absolute;left:21.54px;top:317px;font-size:11px;line-height:12px;font-weight:normal;color:#1E3AA6;transform:scaleX(0.9600);transform-origin:0 0;-webkit-text-stroke:0.2px #1E3AA6;">BY 2011</span>
<span class="t" style="position:absolute;left:90.54px;top:317px;font-size:11px;line-height:12px;font-weight:normal;color:#1E3AA6;transform:scaleX(0.9600);transform-origin:0 0;-webkit-text-stroke:0.2px #1E3AA6;">BY 2011 M11</span>
<span class="t" style="position:absolute;left:160.50px;top:317px;font-size:11px;line-height:12px;font-weight:normal;color:#0C0E1C;transform:scaleX(0.9600);transform-origin:0 0;-webkit-text-stroke:0.2px #0C0E1C;">Green</span>
<span class="t" style="position:absolute;left:159.54px;top:330px;font-size:11px;line-height:12px;font-weight:normal;color:#0C0E1C;transform:scaleX(0.9600);transform-origin:0 0;-webkit-text-stroke:0.2px #0C0E1C;">Bay</span>
<span class="t" style="position:absolute;left:160.50px;top:343px;font-size:11px;line-height:12px;font-weight:normal;color:#0C0E1C;transform:scaleX(0.9600);transform-origin:0 0;-webkit-text-stroke:0.2px #0C0E1C;">20003</span>
<span class="t" style="position:absolute;left:214.84px;top:317px;font-size:11px;line-height:12px;font-weight:normal;color:#1E3AA6;transform:scaleX(0.9600);transform-origin:0 0;-webkit-text-stroke:0.2px #1E3AA6;">Donna</span>
<span class="t" style="position:absolute;left:215.80px;top:330px;font-size:11px;line-height:12px;font-weight:normal;color:#1E3AA6;transform:scaleX(0.9600);transform-origin:0 0;-webkit-text-stroke:0.2px #1E3AA6;">Odenwalld</span>
<span class="t" style="position:absolute;left:214.84px;top:346px;font-size:11px;line-height:12px;font-weight:normal;color:#1E3AA6;transform:scaleX(0.9600);transform-origin:0 0;-webkit-text-stroke:0.2px #1E3AA6;">Donna</span>
<span class="t" style="position:absolute;left:215.80px;top:359px;font-size:11px;line-height:12px;font-weight:normal;color:#1E3AA6;transform:scaleX(0.9600);transform-origin:0 0;-webkit-text-stroke:0.2px #1E3AA6;">Washington</span>
<span class="t" style="position:absolute;left:214.84px;top:375px;font-size:11px;line-height:12px;font-weight:normal;color:#1E3AA6;transform:scaleX(0.9600);transform-origin:0 0;-webkit-text-stroke:0.2px #1E3AA6;">Ethan Hales</span>
<span class="t" style="position:absolute;left:214.84px;top:391px;font-size:11px;line-height:12px;font-weight:normal;color:#1E3AA6;transform:scaleX(0.9600);transform-origin:0 0;-webkit-text-stroke:0.2px #1E3AA6;">Flint Charron</span>
<span class="t" style="left:299px;width:62px;text-align:right;top:317px;font-size:11px;line-height:12px;color:#000">21,214</span>
<span class="t" style="left:364px;width:85px;text-align:right;top:317px;font-size:11px;line-height:12px;color:#000">19.16</span>
<span class="t" style="left:452px;width:79px;text-align:right;top:317px;font-size:11px;line-height:12px;color:#000">1.89</span>
<span class="t" style="left:534px;width:80px;text-align:right;top:317px;font-size:11px;line-height:12px;color:#000">44.29</span>
<span class="t" style="left:617px;width:67px;text-align:right;top:317px;font-size:11px;line-height:12px;color:#000">23.47</span>
<span class="t" style="left:687px;width:66px;text-align:right;top:317px;font-size:11px;line-height:12px;color:#000">27.54</span>
<span class="t" style="left:756px;width:62px;text-align:right;top:317px;font-size:11px;line-height:12px;color:#000">399</span>
<span class="t" style="left:821px;width:80px;text-align:right;top:317px;font-size:11px;line-height:12px;color:#000">0.83</span>
<span class="t" style="left:299px;width:62px;text-align:right;top:346px;font-size:11px;line-height:12px;color:#000">20,340</span>
<span class="t" style="left:364px;width:85px;text-align:right;top:346px;font-size:11px;line-height:12px;color:#000">19.40</span>
<span class="t" style="left:452px;width:79px;text-align:right;top:346px;font-size:11px;line-height:12px;color:#000">1.92</span>
<span class="t" style="left:534px;width:80px;text-align:right;top:346px;font-size:11px;line-height:12px;color:#000">41.94</span>
<span class="t" style="left:617px;width:67px;text-align:right;top:346px;font-size:11px;line-height:12px;color:#000">21.82</span>
<span class="t" style="left:687px;width:66px;text-align:right;top:346px;font-size:11px;line-height:12px;color:#000">24.29</span>
<span class="t" style="left:756px;width:62px;text-align:right;top:346px;font-size:11px;line-height:12px;color:#000">471</span>
<span class="t" style="left:821px;width:80px;text-align:right;top:346px;font-size:11px;line-height:12px;color:#000">0.97</span>
<span class="t" style="left:299px;width:62px;text-align:right;top:375px;font-size:11px;line-height:12px;color:#000">21,234</span>
<span class="t" style="left:364px;width:85px;text-align:right;top:375px;font-size:11px;line-height:12px;color:#000">9.68</span>
<span class="t" style="left:452px;width:79px;text-align:right;top:375px;font-size:11px;line-height:12px;color:#000">1.86</span>
<span class="t" style="left:534px;width:80px;text-align:right;top:375px;font-size:11px;line-height:12px;color:#000">87.74</span>
<span class="t" style="left:617px;width:67px;text-align:right;top:375px;font-size:11px;line-height:12px;color:#000">47.29</span>
<span class="t" style="left:687px;width:66px;text-align:right;top:375px;font-size:11px;line-height:12px;color:#000">43.35</span>
<span class="t" style="left:756px;width:62px;text-align:right;top:375px;font-size:11px;line-height:12px;color:#000">235</span>
<span class="t" style="left:821px;width:80px;text-align:right;top:375px;font-size:11px;line-height:12px;color:#000">0.97</span>
<span class="t" style="left:299px;width:62px;text-align:right;top:391px;font-size:11px;line-height:12px;color:#000">20,919</span>
<span class="t" style="left:364px;width:85px;text-align:right;top:391px;font-size:11px;line-height:12px;color:#000">9.76</span>
<span class="t" style="left:452px;width:79px;text-align:right;top:391px;font-size:11px;line-height:12px;color:#000">1.94</span>
<span class="t" style="left:534px;width:80px;text-align:right;top:391px;font-size:11px;line-height:12px;color:#000">85.73</span>
<span class="t" style="left:617px;width:67px;text-align:right;top:391px;font-size:11px;line-height:12px;color:#000">44.13</span>
<span class="t" style="left:687px;width:66px;text-align:right;top:391px;font-size:11px;line-height:12px;color:#000">40.50</span>
<span class="t" style="left:756px;width:62px;text-align:right;top:391px;font-size:11px;line-height:12px;color:#000">311</span>
<span class="t" style="left:821px;width:80px;text-align:right;top:391px;font-size:11px;line-height:12px;color:#000">1.28</span>
</body></html>
